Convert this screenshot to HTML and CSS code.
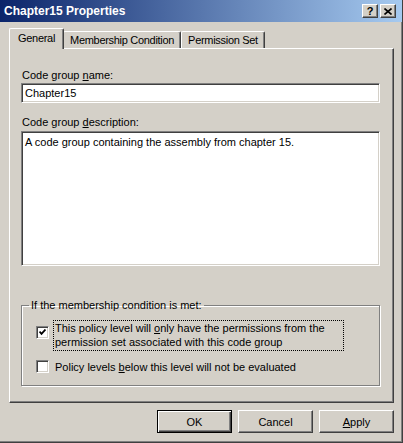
FILE: index.html
```html
<!DOCTYPE html>
<html lang="en">
<head>
  <meta charset="UTF-8" />
  <title>Chapter15 Properties</title>
  <link rel="stylesheet" href="styles.css">
</head>
<body>

  <div class="window">

    <div class="titlebar">
      <span class="title">Chapter15 Properties</span>
      <div class="caption-buttons">
        <span class="cap-btn help">?</span>
        <span class="cap-btn close">
          <svg width="8" height="7" viewBox="0 0 8 7">
            <path d="M0.5 0.5 L7.5 6.5 M7.5 0.5 L0.5 6.5" stroke="#000" stroke-width="1.6" fill="none"/>
          </svg>
        </span>
      </div>
    </div>

    <div class="tabs">
      <div class="tab active">General</div>
      <div class="tab">Membership Condition</div>
      <div class="tab">Permission Set</div>
    </div>

    <div class="panel">
      <div class="label">Code group <u>n</u>ame:</div>
      <div class="textbox">Chapter15</div>

      <div class="label spaced">Code group <u>d</u>escription:</div>
      <div class="textbox multi">A code group containing the assembly from chapter 15.</div>

      <fieldset class="group">
        <legend>If the membership condition is met:</legend>

        <div class="check-row first">
          <span class="checkbox">
            <svg width="7" height="7" viewBox="0 0 7 7">
              <path d="M0.5 2.5 L2.5 4.8 L6.5 0.5" stroke="#000" stroke-width="1.8" fill="none"/>
            </svg>
          </span>
          <span class="check-label focus">This policy level will <u>o</u>nly have the permissions from the<br>permission set associated with this code group</span>
        </div>

        <div class="check-row">
          <span class="checkbox"></span>
          <span class="check-label">Policy levels <u>b</u>elow this level will not be evaluated</span>
        </div>
      </fieldset>
    </div>

    <div class="buttons">
      <button class="btn default">OK</button>
      <button class="btn">Cancel</button>
      <button class="btn"><u>A</u>pply</button>
    </div>

  </div>

</body>
</html>
```

FILE: styles.css
```css
* {
  margin: 0;
  padding: 0;
  box-sizing: border-box;
}

body {
  font-family: 'Liberation Sans', Arial, sans-serif;
  font-size: 11px;
  line-height: 13px;
  color: #000;
  background-color: #d4d0c8;
}

.window {
  width: 403px;
  height: 443px;
  background-color: #d4d0c8;
  border-right: 1px solid #404040;
  border-bottom: 1px solid #404040;
  box-shadow: inset -1px -1px #808080;
}

/* Title bar */
.titlebar {
  height: 22px;
  display: flex;
  align-items: center;
  justify-content: space-between;
  padding: 0 6px 0 4px;
  background: linear-gradient(to right, #0a246a, #a6caf0);
}

.title {
  color: #fff;
  font-weight: bold;
  font-size: 12px;
}

.caption-buttons {
  display: flex;
  gap: 2px;
}

.cap-btn {
  width: 16px;
  height: 14px;
  display: flex;
  align-items: center;
  justify-content: center;
  background-color: #d4d0c8;
  border: 1px solid;
  border-color: #fff #404040 #404040 #fff;
  box-shadow: inset -1px -1px #808080;
  font-weight: bold;
  font-size: 11px;
}

/* Tabs */
.tabs {
  display: flex;
  align-items: flex-end;
  margin: 6px 0 0 10px;
}

.tab {
  padding: 2px 6px 1px;
  letter-spacing: -0.3px;
  border: 1px solid;
  border-bottom: none;
  border-color: #fff #404040 #fff #fff;
  box-shadow: inset -1px 0 #808080;
  border-radius: 2px 2px 0 0;
  background-color: #d4d0c8;
}

.tab.active {
  position: relative;
  z-index: 1;
  padding: 3px 8px 4px;
  margin: 0 -1px -1px -1px;
}

/* Tab panel */
.panel {
  width: 385px;
  height: 355px;
  margin-left: 9px;
  padding: 20px 0 0 11px;
  border: 1px solid;
  border-color: #fff #404040 #404040 #fff;
  box-shadow: inset -1px -1px #808080;
}

.label {
  padding-left: 1px;
}

.label.spaced {
  margin-top: 13px;
}

.textbox {
  width: 359px;
  height: 20px;
  margin-top: 1px;
  padding: 3px 3px 0;
  background-color: #fff;
  border: 1px solid;
  border-color: #808080 #fff #fff #808080;
  box-shadow: inset 1px 1px #404040, inset -1px -1px #d4d0c8;
}

.textbox.multi {
  height: 135px;
  margin-top: 2px;
  padding-top: 4px;
}

/* Group box */
.group {
  width: 359px;
  margin-top: 33px;
  padding: 0 0 9px 7px;
  border: 1px solid #808080;
  box-shadow: inset 1px 1px #fff, 1px 1px #fff;
}

.group legend {
  padding: 0 2px;
  line-height: 13px;
}

.check-row {
  display: flex;
  align-items: flex-start;
  gap: 4px;
  margin: 8px 0 0 7px;
}

.checkbox {
  width: 13px;
  height: 13px;
  margin-top: 1px;
  display: flex;
  align-items: center;
  justify-content: center;
  background-color: #fff;
  border: 1px solid;
  border-color: #808080 #fff #fff #808080;
  box-shadow: inset 1px 1px #404040, inset -1px -1px #d4d0c8;
}

.check-row.first .checkbox {
  margin-top: 6px;
}

.check-label {
  width: 291px;
  line-height: 14px;
  padding: 0 1px 1px;
  border: 1px solid transparent;
}

.check-label.focus {
  border: 1px dotted #000;
}

/* Dialog buttons */
.buttons {
  display: flex;
  justify-content: flex-end;
  gap: 6px;
  margin-top: 7px;
  padding-right: 8px;
}

.btn {
  width: 75px;
  height: 23px;
  font-family: 'Liberation Sans', Arial, sans-serif;
  font-size: 11px;
  color: #000;
  background-color: #d4d0c8;
  border: 1px solid;
  border-color: #fff #404040 #404040 #fff;
  box-shadow: inset -1px -1px #808080;
}

.btn.default {
  border: 1px solid #000;
  box-shadow: inset 1px 1px #fff, inset -1px -1px #404040, inset -2px -2px #808080;
}
```
